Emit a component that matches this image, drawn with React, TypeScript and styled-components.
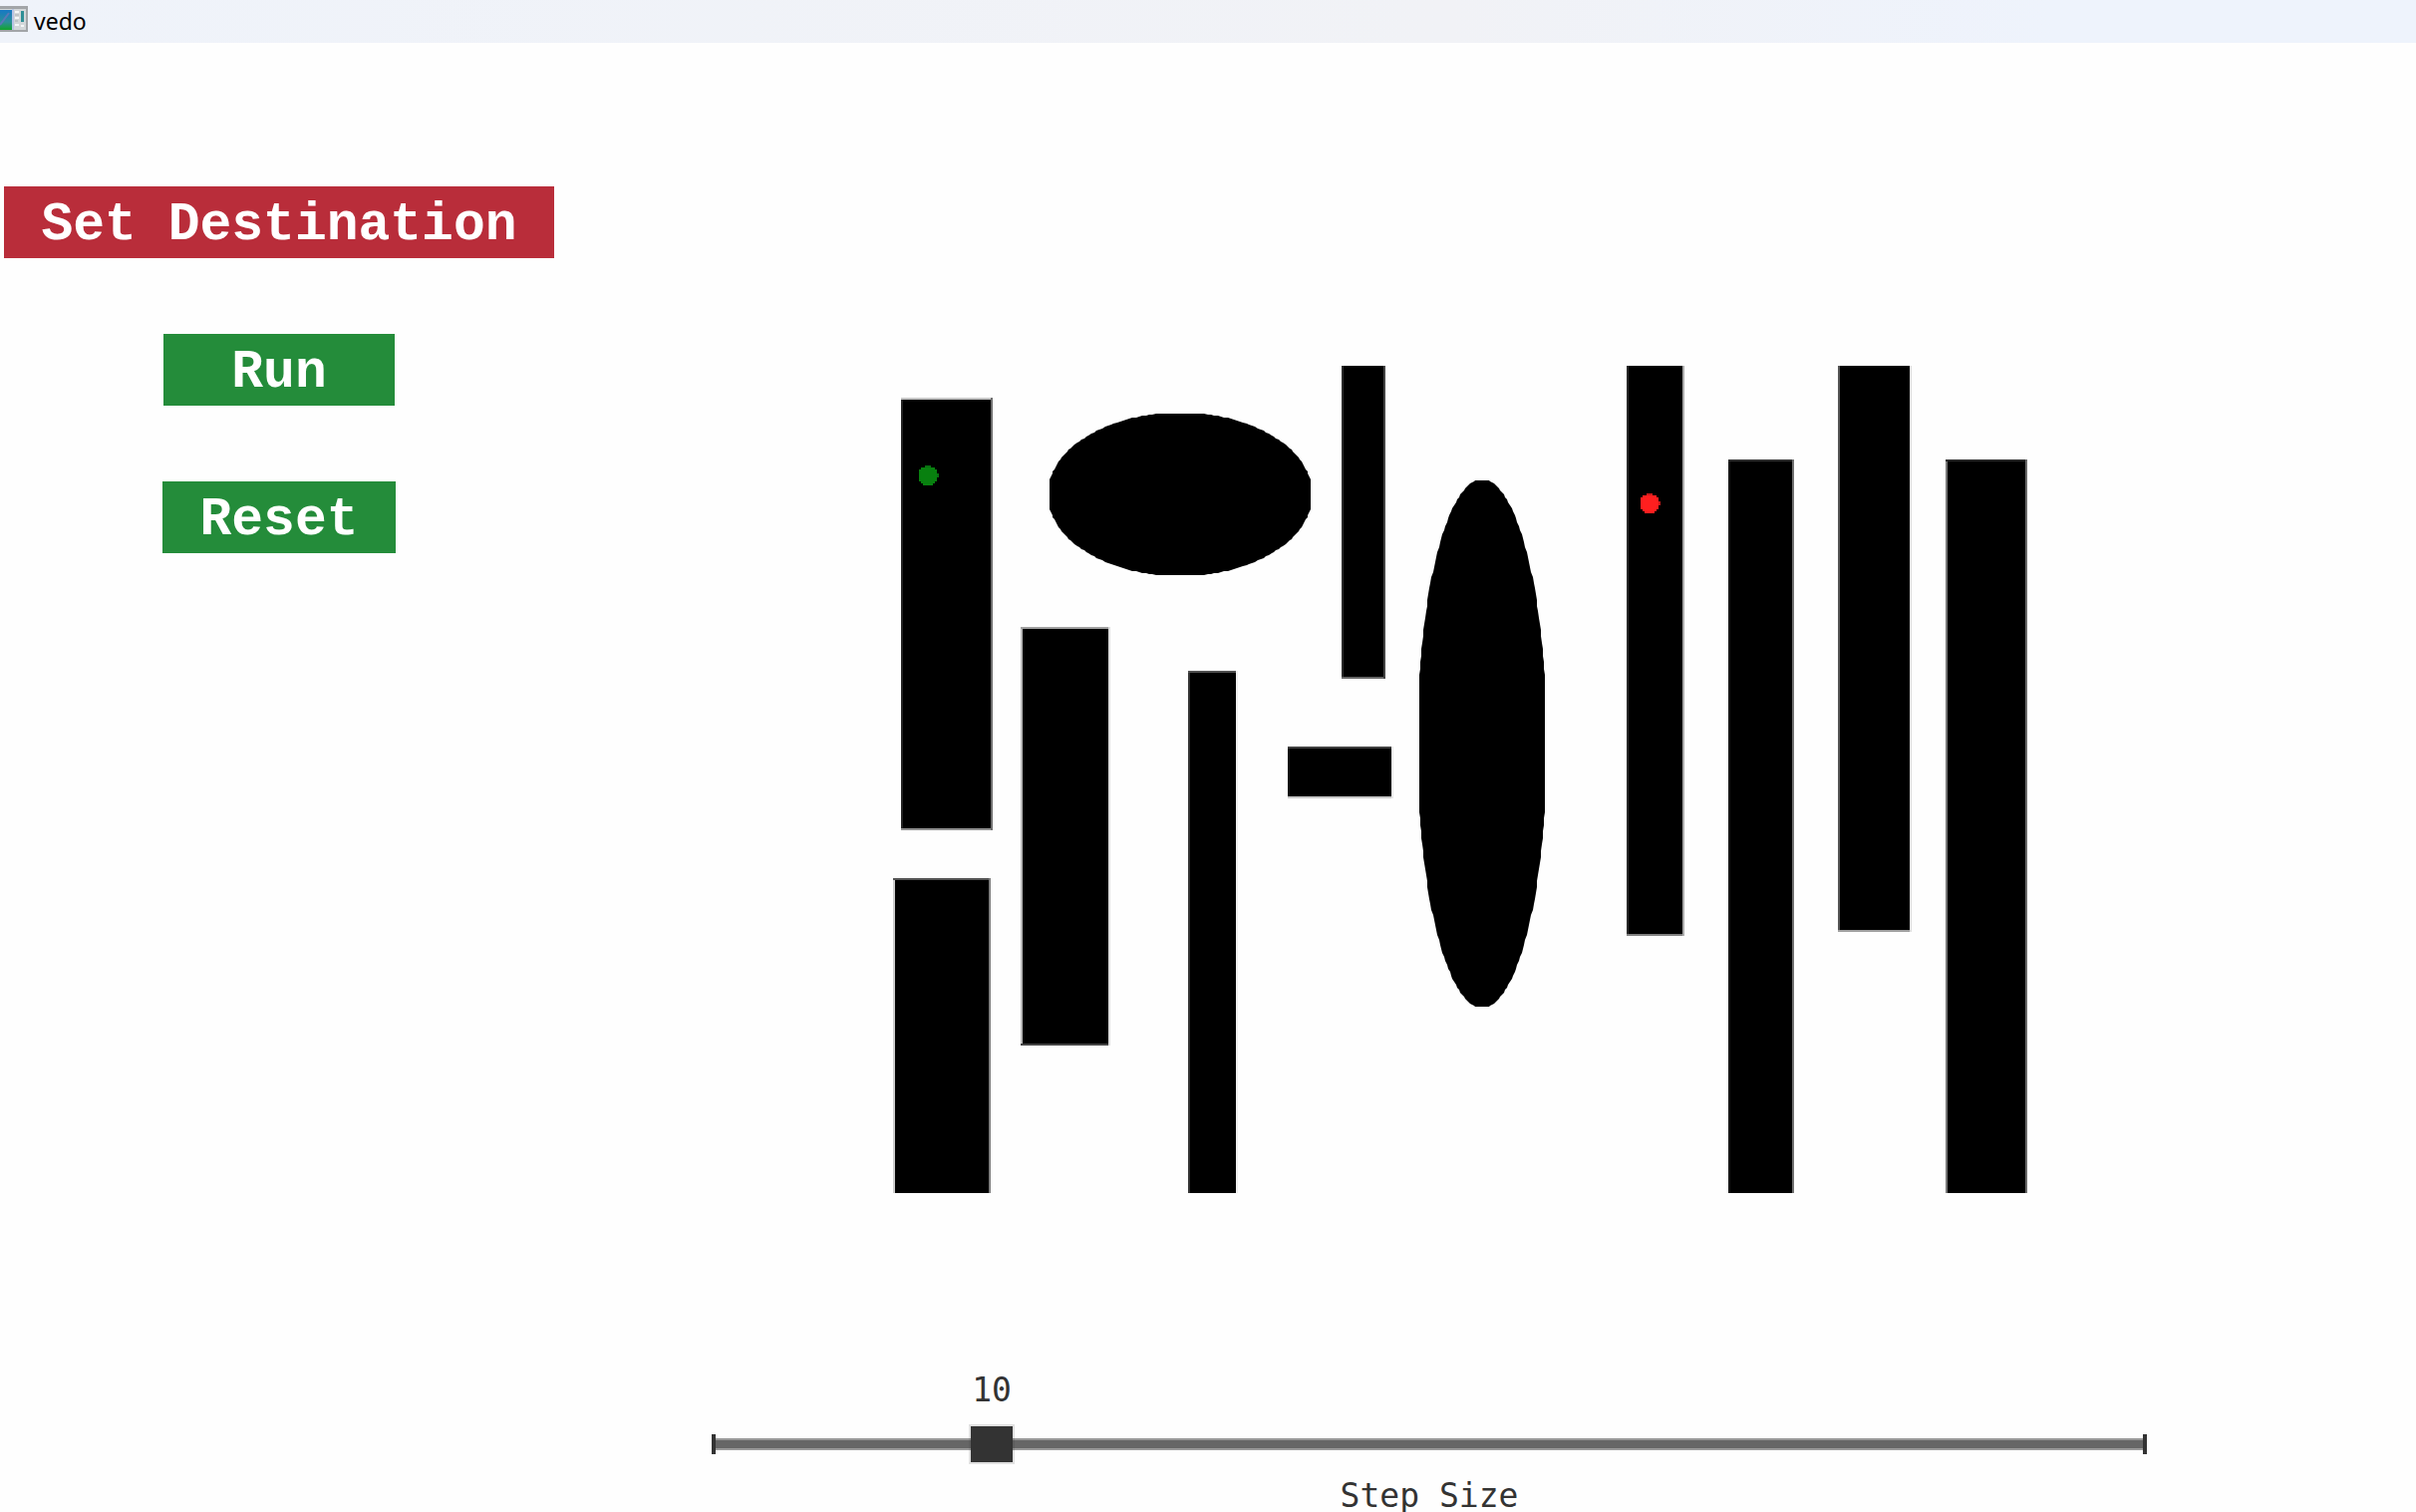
import React, { useState } from "react";
import styled, { createGlobalStyle } from "styled-components";

const GlobalStyle = createGlobalStyle`
  * { box-sizing: border-box; }
  body { margin: 0; background: #fefefe; overflow: hidden; }
`;

const Page = styled.div`
  min-height: 100vh;
  background: #fefefe;
`;

const TitleBar = styled.header`
  display: flex;
  align-items: center;
  gap: 6px;
  height: 43px;
  background: linear-gradient(90deg, #eff3fa 0%, #f1f2f6 60%, #eef3fc 85%);
`;

const Title = styled.h1`
  margin: 0;
  padding-bottom: 2px;
  font: 400 23px/32px "Noto Sans", "Open Sans", sans-serif;
  color: #000;
`;

const Workspace = styled.main`
  display: grid;
  grid-template-columns: 560px minmax(0, 1fr);
`;

const Actions = styled.nav`
  display: flex;
  flex-direction: column;
  align-items: center;
  gap: 76px;
  padding-top: 144px;
`;

const ActionButton = styled.button<{ $tone: "red" | "green" }>`
  height: 72px;
  min-width: 232px;
  padding: 6px 37px 0;
  border: 0;
  background: ${(p) => (p.$tone === "red" ? "#b92d3a" : "#248c3a")};
  color: #fff;
  font: 700 53px/66px "Liberation Mono", monospace;
  white-space: nowrap;
  cursor: pointer;
`;

const Scene = styled.section`
  display: flex;
  flex-direction: column;
  align-items: center;
  gap: 178px;
  padding: 324px 116px 0 0;
`;

const MapDrawing = styled.svg`
  display: block;
  width: 100%;
  max-width: 1200px;
`;

const SliderField = styled.div`
  display: flex;
  flex-direction: column;
  width: 100%;
  max-width: 1440px;
  font: 400 33px/40px "DejaVu Sans Mono", monospace;
  color: #333;
`;

const ValueRail = styled.div`
  padding: 0 21px;
  margin-bottom: 16px;
`;

const Value = styled.output`
  display: block;
  width: max-content;
  transform: translateX(-50%);
`;

const Range = styled.input`
  appearance: none;
  width: 100%;
  height: 36px;
  margin: 0 0 14px;
  background:
    linear-gradient(#333, #333) left center / 4px 20px no-repeat,
    linear-gradient(#333, #333) right center / 4px 20px no-repeat,
    linear-gradient(#666, #666) center / 100% 8px no-repeat,
    linear-gradient(#999, #999) center / 100% 12px no-repeat;
  cursor: pointer;

  &::-webkit-slider-thumb {
    appearance: none;
    width: 42px;
    height: 36px;
    background: #333;
    border-radius: 0;
    box-shadow: 0 0 0 2px rgba(51, 51, 51, 0.15);
  }
`;

const SliderLabel = styled.label`
  align-self: center;
`;

type Block = {
  x: number; y: number; w: number; h: number;
  top?: string; right?: string; bottom?: string; left?: string;
};

const blocks: Block[] = [
  { x: 904, y: 399, w: 92, h: 434, top: "#c4c4c4", right: "#707070", bottom: "#909090", left: "#222" },
  { x: 896, y: 881, w: 98, h: 316, top: "#555", right: "#808080", left: "#ccc" },
  { x: 1024, y: 629, w: 90, h: 420, top: "#a0a0a0", right: "#ddd", bottom: "#444", left: "#b8b8b8" },
  { x: 1192, y: 673, w: 50, h: 524, top: "#505050", right: "#f0f0f0", left: "#333" },
  { x: 1346, y: 367, w: 44, h: 314, right: "#444", bottom: "#666", left: "#2a2a2a" },
  { x: 1292, y: 749, w: 106, h: 52, top: "#404040", right: "#e8e8e8", bottom: "#c8c8c8", left: "#101010" },
  { x: 1632, y: 367, w: 58, h: 572, right: "#aaa", bottom: "#808080", left: "#282828" },
  { x: 1734, y: 461, w: 66, h: 736, top: "#303030", right: "#707070", left: "#181818" },
  { x: 1844, y: 367, w: 74, h: 568, right: "#e0e0e0", bottom: "#a0a0a0", left: "#555" },
  { x: 1952, y: 461, w: 82, h: 736, top: "#282828", right: "#6a6a6a", left: "#777" },
];

/* Samples an ellipse and clamps it to a box, which leaves a short flat run at each pole. */
const ovalPoints = (cx: number, cy: number, rx: number, ry: number, maxX: number, maxY: number) => {
  const clamp = (v: number, max: number) => Math.max(-max, Math.min(max, v));
  return Array.from({ length: 240 }, (_, i) => {
    const a = (i / 240) * Math.PI * 2;
    const x = Math.round(clamp(rx * Math.cos(a), maxX));
    const y = Math.round(clamp(ry * Math.sin(a), maxY));
    return `${cx + x},${cy + y}`;
  }).join(" ");
};

const wideOval = ovalPoints(1184, 496, 133, 82, 131, 81);
const tallOval = ovalPoints(1487, 746, 65, 265, 63, 264);

function BlockShape({ x, y, w, h, top, right, bottom, left }: Block) {
  const side = bottom ? h - 2 : h;
  return (
    <g shapeRendering="crispEdges">
      <rect x={x} y={y} width={w} height={h} fill="#000" />
      {top && <rect x={x} y={y} width={w} height={2} fill={top} />}
      {left && <rect x={x} y={top ? y + 2 : y} width={2} height={top ? side - 2 : side} fill={left} />}
      {bottom && <rect x={x} y={y + h - 2} width={w} height={2} fill={bottom} />}
      {right && <rect x={x + w - 2} y={y} width={2} height={h} fill={right} />}
    </g>
  );
}

function Marker({ x, y, color, edge }: { x: number; y: number; color: string; edge: string }) {
  return (
    <g transform={`translate(${x} ${y}) scale(2)`} shapeRendering="crispEdges">
      <path fill={color} d="M1 1H8V2H9V8H8V9H7V10H2V9H1V8H0V2H1Z" />
      <path fill={edge} d="M3 0H6V1H3ZM9 4H10V6H9Z" />
    </g>
  );
}

function AppIcon() {
  return (
    <svg width="28" height="43" viewBox="0 0 28 43" aria-hidden="true">
      <defs>
        <linearGradient id="surface" x1="0" y1="0" x2="0" y2="1">
          <stop offset="0" stopColor="#1678c4" />
          <stop offset="0.6" stopColor="#2b8f9a" />
          <stop offset="1" stopColor="#12a52c" />
        </linearGradient>
      </defs>
      <rect x="-2" y="6" width="30" height="26" fill="#a2a5a8" />
      <rect x="-2" y="9" width="28" height="21" fill="#d3d7d9" />
      <rect x="-2" y="10" width="14" height="20" fill="url(#surface)" />
      <path d="M0 25 9 13" stroke="#5a78b8" strokeWidth="2" />
      <rect x="12" y="9" width="2" height="21" fill="#b9c4e4" />
      <rect x="21" y="11" width="3" height="11" fill="#2f8f96" />
      <path d="M15 12h4M15 18h4M15 25h4M21 26h3" stroke="#f5f7f7" strokeWidth="2" />
      <path d="M15 15h4M15 21h3" stroke="#a9b0b3" strokeWidth="1" />
    </svg>
  );
}

const MIN = 2;
const MAX = 45;

export default function App() {
  const [step, setStep] = useState(10);
  return (
    <Page>
      <GlobalStyle />
      <TitleBar>
        <AppIcon />
        <Title>vedo</Title>
      </TitleBar>
      <Workspace>
        <Actions>
          <ActionButton $tone="red">Set Destination</ActionButton>
          <ActionButton $tone="green">Run</ActionButton>
          <ActionButton $tone="green" onClick={() => setStep(10)}>Reset</ActionButton>
        </Actions>
        <Scene>
          <MapDrawing viewBox="834 367 1200 830" role="img" aria-label="Obstacle map">
            {blocks.map((b) => <BlockShape key={`${b.x}-${b.y}`} {...b} />)}
            <polygon points={wideOval} />
            <polygon points={tallOval} />
            <Marker x={922} y={467} color="#08800f" edge="#087010" />
            <Marker x={1646} y={495} color="#ff1f1f" edge="#c81a1a" />
          </MapDrawing>
          <SliderField>
            <ValueRail>
              <Value htmlFor="step-size" style={{ marginLeft: `${((step - MIN) / (MAX - MIN)) * 100}%` }}>
                {step}
              </Value>
            </ValueRail>
            <Range
              id="step-size"
              type="range"
              min={MIN}
              max={MAX}
              value={step}
              onChange={(e) => setStep(Number(e.target.value))}
            />
            <SliderLabel htmlFor="step-size">Step Size</SliderLabel>
          </SliderField>
        </Scene>
      </Workspace>
    </Page>
  );
}
